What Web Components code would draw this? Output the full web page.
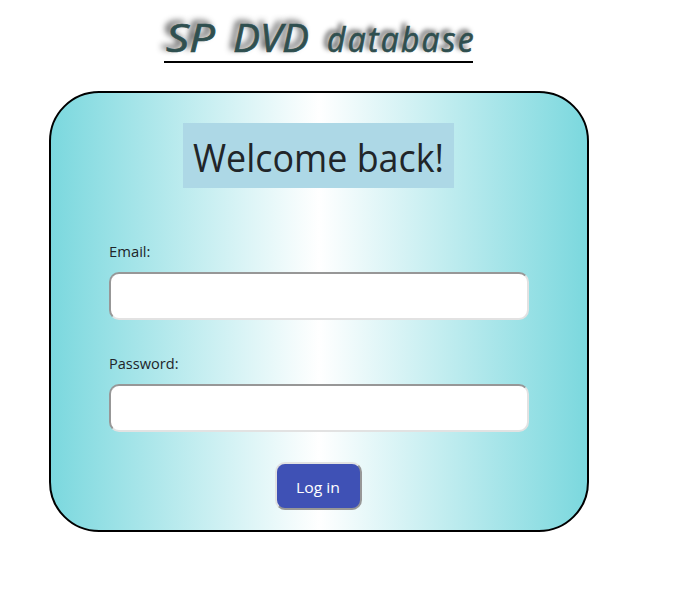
<!DOCTYPE html>
<html lang="en">
<head>
<meta charset="utf-8">
<title>SP DVD database</title>
<style>
body { margin: 0; background: #fff; font-family: "Open Sans", "Noto Sans", sans-serif; color: #212529; }
</style>
</head>
<body>
<login-page>
  <site-title slot="header"></site-title>
  <login-card>
    <welcome-banner slot="banner"><fit-text width="251">Welcome back!</fit-text></welcome-banner>
    <form-field type="email"><fit-text width="41.5">Email:</fit-text></form-field>
    <form-field type="password"><fit-text width="69.5">Password:</fit-text></form-field>
    <submit-button slot="action"><fit-text width="44">Log in</fit-text></submit-button>
  </login-card>
</login-page>
<script>
const define = (name, html, setup) => customElements.define(name, class extends HTMLElement {
  constructor() {
    super();
    this.attachShadow({ mode: 'open' }).innerHTML = html;
  }
  connectedCallback() { if (setup) setup(this); }
});

define('site-title', `<style>
  :host { display: block; box-sizing: border-box; width: 309px; height: 63px; border-bottom: 2px solid #000; }
  h1 { margin: 0 -3px 0 0; padding: 9px 0 0 2px; display: flex; justify-content: space-between; align-items: baseline;
    font: italic 500 38px/56px "Open Sans", sans-serif; color: #2f4f4f;
    -webkit-text-stroke: .7px #2f4f4f; text-shadow: -4px -3px 6px rgba(0,0,0,.85); }
  .spaced { font-size: 35px; letter-spacing: 2.5px; }
</style><h1><fit-text width="49">SP</fit-text><fit-text width="76">DVD</fit-text><fit-text class="spaced" width="149">database</fit-text></h1>`);

define('login-page', `<style>
  :host { display: flex; flex-direction: column; align-items: center; gap: 28px; width: 637px; }
  main { margin-left: 1px; }
</style><slot name="header"></slot><main><slot></slot></main>`);

define('login-card', `<style>
  :host { display: flex; flex-direction: column; align-items: center; box-sizing: border-box;
    width: 540px; height: 441px; padding-top: 30px; border: 2px solid #000; border-radius: 50px;
    background: linear-gradient(to right, #7bd8de, #fff, #7bd8de); }
  .fields { display: flex; flex-direction: column; gap: 28px; padding: 48px 0 30px; }
</style><slot name="banner"></slot><div class="fields"><slot></slot></div><slot name="action"></slot>`);

define('welcome-banner', `<style>
  :host { display: block; box-sizing: border-box; width: 271px; height: 65px; margin-right: 1px;
    padding: 7px 10px; background: #add8e6; font-size: 37.5px; line-height: 55px; }
</style><slot></slot>`);

define('form-field', `<style>
  :host { display: flex; flex-direction: column; width: 420px; }
  label { height: 36px; line-height: 30px; font-size: 15px; }
  input { box-sizing: border-box; width: 100%; height: 48px; margin: 0; padding: 0 10px; background: #fff;
    border: 2px solid; border-color: #979797 #e2e2e2 #e2e2e2 #979797; border-radius: 10px; }
</style><label><slot></slot></label><input>`, el => {
  el.shadowRoot.querySelector('input').type = el.getAttribute('type');
});

define('submit-button', `<style>
  :host { display: block; margin-right: 2px; }
  button { display: block; box-sizing: border-box; width: 87px; height: 48px; margin: 0; padding: 2px 0 0 19.5px;
    border: 2px solid; border-color: #e2e2e2 #979797 #979797 #e2e2e2; border-radius: 10px;
    background: #3f51b5; color: #fff; font: 15px/42px "Open Sans", "Noto Sans", sans-serif; text-align: left; }
</style><button><slot></slot></button>`);

/* One line of text, scaled horizontally to the given width.
   Defined last, so that the fonts of its containers apply when it measures. */
define('fit-text', `<style>
  :host { display: block; white-space: nowrap; }
  span { display: inline-block; transform-origin: left center; }
</style><span><slot></slot></span>`, el => {
  const width = +el.getAttribute('width');
  const span = el.shadowRoot.querySelector('span');
  const natural = span.getBoundingClientRect().width;
  el.style.width = width + 'px';
  span.style.transform = `scaleX(${width / natural})`;
});
</script>
</body>
</html>
